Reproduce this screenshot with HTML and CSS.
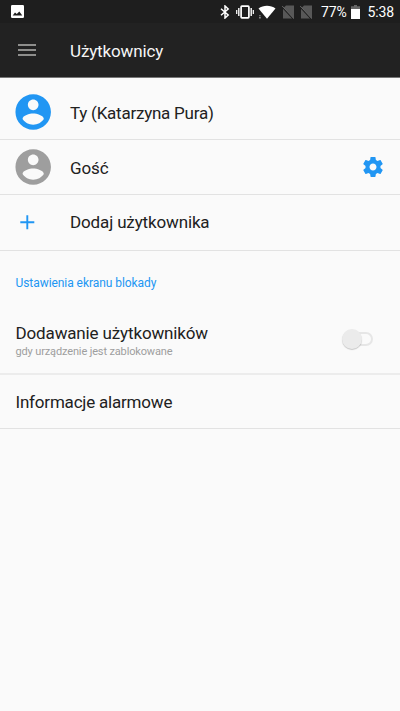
FILE: index.html
```html
<!DOCTYPE html>
<html lang="pl">
<head>
<meta charset="utf-8">
<title>Użytkownicy</title>
<link rel="stylesheet" href="styles.css">
</head>
<body>
<div class="status">
  <svg class="photo" width="13" height="13" viewBox="0 0 13 13"><rect width="13" height="13" rx="1.2" fill="#fff"/><path d="M1.700 10.500 4 7.500 5.800 9 8.300 6.400 11.300 10.500z" fill="#1e1e1e"/></svg>
  <svg class="bt" width="10" height="14" viewBox="0 0 10 14" fill="none" stroke="#fff" stroke-width="1.500"><path d="M1 3.800 8.200 10 5 13V1l3.200 3L1 10.200"/></svg>
  <svg class="vib" width="18" height="14" viewBox="0 0 18 14" fill="none" stroke="#fff"><rect x="5.100" y="1.200" width="7.800" height="11.600" rx=".8" stroke-width="1.700"/><path d="M2.800 3v8M15.200 3v8" stroke-width="1.400"/><path d="M.7 5v4M17.300 5v4" stroke-width="1.200"/></svg>
  <svg class="wifi" width="18" height="14" viewBox="0 0 18 14"><path d="M.5 3.500C5.200-.3 12.800-.3 17.500 3.500L9 13.800z" fill="#fff"/><path d="M1 10.200h1.800v1H1zM1 12h1.800v1.500H1z" fill="#888"/></svg>
  <svg class="sim" width="12" height="14" viewBox="0 0 12 14"><path d="M4 .5h8v13H1V3.500z" fill="#585858"/><path d="M0 1.800 11.200 14" stroke="#1e1e1e" stroke-width="1.300"/><path d="M0 .8 12 13.800" stroke="#666"/></svg>
  <svg class="sim" width="12" height="14" viewBox="0 0 12 14"><path d="M4 .5h8v13H1V3.500z" fill="#585858"/><path d="M0 1.800 11.200 14" stroke="#1e1e1e" stroke-width="1.300"/><path d="M0 .8 12 13.800" stroke="#666"/></svg>
  <span class="percent">77%</span>
  <svg class="battery" width="9" height="14" viewBox="0 0 9 14"><path d="M3 0h3v1.300h3V4H0V1.300h3z" fill="#666"/><path d="M0 4h9v10H0z" fill="#fff"/></svg>
  <span class="clock">5:38</span>
</div>
<header class="bar">
  <svg class="menu" width="18" height="12" viewBox="0 0 18 12" fill="#8e8e8c"><path d="M0 0h18v2H0zM0 5h18v2H0zM0 10h18v2H0z"/></svg>
  <h1>Użytkownicy</h1>
</header>
<main>
  <div class="row first">
    <svg class="avatar me" viewBox="1.750 1.900 20.280 20.280"><path d="M12 2C6.480 2 2 6.480 2 12s4.480 10 10 10 10-4.480 10-10S17.520 2 12 2zm0 3c1.660 0 3 1.340 3 3s-1.340 3-3 3-3-1.340-3-3 1.340-3 3-3zm0 14.200c-2.500 0-4.710-1.280-6-3.220.03-1.990 4-3.080 6-3.080 1.990 0 5.970 1.090 6 3.080-1.290 1.940-3.500 3.220-6 3.220z"/></svg>
    <span class="label name">Ty (Katarzyna Pura)</span>
  </div>
  <div class="row">
    <svg class="avatar" viewBox="1.750 1.900 20.280 20.280"><path d="M12 2C6.480 2 2 6.480 2 12s4.480 10 10 10 10-4.480 10-10S17.520 2 12 2zm0 3c1.660 0 3 1.340 3 3s-1.340 3-3 3-3-1.340-3-3 1.340-3 3-3zm0 14.200c-2.500 0-4.710-1.280-6-3.220.03-1.990 4-3.080 6-3.080 1.990 0 5.970 1.090 6 3.080-1.290 1.940-3.500 3.220-6 3.220z"/></svg>
    <span class="label guest">Gość</span>
    <svg class="gear" width="24" height="24" viewBox="0 0 24 24"><path d="M19.430 12.980c.04-.32.07-.64.07-.98s-.03-.66-.07-.98l2.110-1.650c.19-.15.24-.42.12-.64l-2-3.460c-.12-.22-.39-.3-.61-.22l-2.490 1c-.52-.4-1.080-.73-1.690-.98l-.38-2.650C14.460 2.180 14.250 2 14 2h-4c-.25 0-.46.18-.49.42l-.38 2.650c-.61.25-1.170.59-1.690.98l-2.490-1c-.23-.09-.49 0-.61.22l-2 3.460c-.13.22-.07.49.12.64l2.110 1.650c-.04.32-.07.65-.07.98s.03.66.07.98l-2.110 1.650c-.19.15-.24.42-.12.64l2 3.460c.12.22.39.3.61.22l2.490-1c.52.4 1.080.73 1.690.98l.38 2.650c.03.24.24.42.49.42h4c.25 0 .46-.18.49-.42l.38-2.650c.61-.25 1.170-.59 1.690-.98l2.490 1c.23.09.49 0 .61-.22l2-3.460c.12-.22.07-.49-.12-.64l-2.110-1.650zM12 15.500c-1.930 0-3.500-1.570-3.500-3.500s1.570-3.500 3.500-3.500 3.500 1.570 3.500 3.500-1.570 3.500-3.500 3.500z"/></svg>
  </div>
  <div class="row add">
    <svg class="plus" width="15" height="15" viewBox="0 0 15 15"><path d="M7.300 .2v14M.3 7.200h14"/></svg>
    <span class="label">Dodaj użytkownika</span>
  </div>
  <h2>Ustawienia ekranu blokady</h2>
  <div class="row lock">
    <div class="stack">
      <span class="label">Dodawanie użytkowników</span>
      <span class="note">gdy urządzenie jest zablokowane</span>
    </div>
    <div class="switch"><div class="thumb"></div></div>
  </div>
  <div class="row info"><span class="label">Informacje alarmowe</span></div>
</main>
</body>
</html>
```
FILE: styles.css
```css
* { box-sizing: border-box; }
body {
  margin: 0;
  height: 711px;
  overflow: hidden;
  background: #fafafa;
  color: #212121;
  font-family: Roboto, sans-serif;
}
svg { display: block; flex: none; }
.status {
  display: flex;
  align-items: center;
  height: 23px;
  padding-left: 11px;
  background: #1e1e1e;
  color: #fff;
  font-size: 14px;
  white-space: nowrap;
}
.status span { line-height: 21px; padding-top: 1px; letter-spacing: -.1px; }
.bt { margin-left: 196px; }
.vib { margin-left: 6px; }
.wifi { margin-left: 4px; }
.sim { margin-left: 6px; }
.percent { width: 26px; margin-left: 9px; }
.battery { margin-left: 4px; }
.clock { margin-left: 7.500px; }
.bar {
  display: flex;
  align-items: center;
  height: 55px;
  padding-left: 18px;
  background: #222;
  border-bottom: 1px solid #777;
}
.menu { margin-right: 34px; }
h1 {
  margin: 0;
  padding-top: 2px;
  color: #f5f5f5;
  font-size: 17px;
  font-weight: 400;
  line-height: 20px;
  letter-spacing: -.14px;
}
.row {
  display: flex;
  align-items: center;
  height: 55px;
  padding: 0 15.500px;
  border-bottom: 1px solid #e2e2e2;
}
.first { height: 62px; padding-top: 7px; }
.avatar { width: 36px; height: 36px; margin: 0 19px 0 -.5px; fill: #9e9e9e; }
.me { fill: #2196f3; }
.label { font-size: 17px; line-height: 20px; letter-spacing: -.14px; white-space: nowrap; }
.name { padding-top: 1px; letter-spacing: -.24px; }
.guest { padding-top: 1px; }
.gear { margin-left: auto; margin-right: -.5px; fill: #2196f3; }
.add { height: 56px; padding-bottom: 1px; }
.plus { margin: 0 35px 0 4.500px; fill: none; stroke: #2196f3; stroke-width: 1.900; }
h2 {
  margin: 24px 0 0 15.500px;
  color: #2196f3;
  font-size: 12px;
  font-weight: 400;
  line-height: 16px;
  letter-spacing: -.06px;
}
.lock { height: 84px; padding-top: 16px; border-bottom: 2px solid #ececec; }
.stack { display: flex; flex-direction: column; }
.note {
  margin-bottom: -1px;
  padding-top: 1px;
  color: #9e9e9e;
  font-size: 11px;
  line-height: 15px;
  letter-spacing: -.14px;
}
.switch {
  width: 25px;
  height: 14px;
  margin: -3px 11.500px 0 auto;
  border: 2px solid #e6e6e6;
  border-radius: 7px;
}
.thumb {
  width: 20px;
  height: 20px;
  margin: -5px 0 0 -8px;
  border-radius: 50%;
  background: #ebebeb;
  box-shadow: 0 1px 1px #0003;
}
.info { height: 54px; }
.info .label { letter-spacing: -.2px; }
```
